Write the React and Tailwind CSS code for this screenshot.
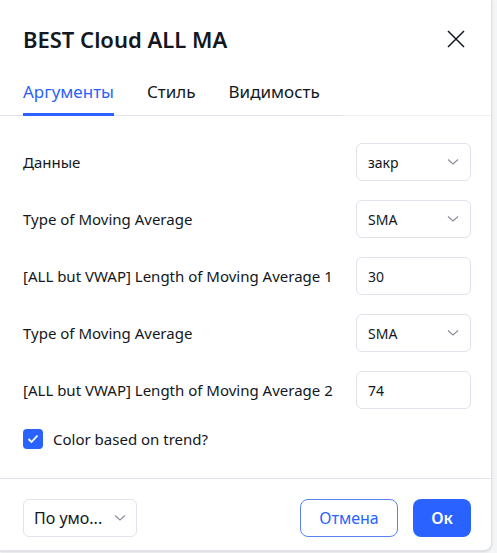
import React, { useState } from 'react';

const font = { fontFamily: '"Noto Sans", "Open Sans", sans-serif' };

const Chevron = ({ className = '' }) => (
  <svg className={className} width="12" height="8" viewBox="0 0 12 8" fill="none">
    <path d="M1 1.5l5 4.5 5-4.5" stroke="#8a8f9c" strokeWidth="1.2" />
  </svg>
);

const SelectBox = ({ value }) => (
  <div className="flex h-[38px] w-[115px] items-center justify-between rounded-md border border-[#e0e3eb] pl-[11px] pr-[11px] text-[14px] text-[#131722]">
    <span>{value}</span>
    <Chevron />
  </div>
);

const NumberBox = ({ value }) => (
  <div className="flex h-[38px] w-[115px] items-center rounded-md border border-[#e0e3eb] pl-[11px] text-[14px] text-[#131722]">
    {value}
  </div>
);

const rows = [
  { label: 'Данные', kind: 'select', value: 'закр' },
  { label: 'Type of Moving Average', kind: 'select', value: 'SMA' },
  { label: '[ALL but VWAP] Length of Moving Average 1', kind: 'number', value: '30' },
  { label: 'Type of Moving Average', kind: 'select', value: 'SMA' },
  { label: '[ALL but VWAP] Length of Moving Average 2', kind: 'number', value: '74' },
];

export default function App() {
  const [tab, setTab] = useState(0);
  const [checked, setChecked] = useState(true);
  const tabs = ['Аргументы', 'Стиль', 'Видимость'];

  return (
    <div className="h-[553px] w-[497px] overflow-hidden bg-[#f4f5f7]" style={font}>
      <div className="flex h-[551px] w-[492px] flex-col rounded-br-lg border-r border-b border-[#e0e3eb] bg-white shadow-sm">
        {/* Header */}
        <div className="flex items-center justify-between pl-[23px] pr-[25px] pt-[25px]">
          <h1 className="text-[22px] font-semibold leading-7 text-[#131722]">BEST Cloud ALL MA</h1>
          <svg width="20" height="20" viewBox="0 0 20 20" fill="none">
            <path d="M2 2l16 16M18 2L2 18" stroke="#131722" strokeWidth="1.5" />
          </svg>
        </div>

        {/* Tabs */}
        <div className="mt-[27px] border-b border-[#eef0f3]">
          <div className="flex w-[343px] gap-[33px] border-b border-[#e0e3eb] pl-[23px] -mb-px">
            {tabs.map((t, i) => (
              <button
                key={t}
                onClick={() => setTab(i)}
                className={`-mb-px border-b-[3px] pb-[9px] text-[17px] leading-6 ${
                  tab === i ? 'border-[#2962ff] text-[#2962ff]' : 'border-transparent text-[#131722]'
                }`}
              >
                {t}
              </button>
            ))}
          </div>
        </div>

        {/* Fields */}
        <div className="flex flex-col gap-[19px] pl-[23px] pr-[20px] pt-[27px]">
          {rows.map((r, i) => (
            <div key={i} className="flex items-center justify-between">
              <span className="text-[15px] text-[#131722]">{r.label}</span>
              {r.kind === 'select' ? <SelectBox value={r.value} /> : <NumberBox value={r.value} />}
            </div>
          ))}
          <label className="flex items-center gap-[10px]">
            <button
              onClick={() => setChecked(!checked)}
              className={`flex h-[20px] w-[20px] items-center justify-center rounded-[4px] ${
                checked ? 'bg-[#2962ff]' : 'border border-[#b2b5be]'
              }`}
            >
              {checked && (
                <svg width="12" height="10" viewBox="0 0 12 10" fill="none">
                  <path d="M1.5 5l3 3 6-6.5" stroke="white" strokeWidth="1.8" />
                </svg>
              )}
            </button>
            <span className="text-[15px] text-[#131722]">Color based on trend?</span>
          </label>
        </div>

        {/* Footer */}
        <div className="mt-[27px] flex items-center justify-between border-t border-[#e0e3eb] pl-[23px] pr-[20px] pt-[20px]">
          <div className="flex h-[38px] w-[114px] items-center justify-between rounded-md border border-[#e0e3eb] pl-[10px] pr-[10px] text-[16px] text-[#131722]">
            <span>По умо...</span>
            <Chevron />
          </div>
          <div className="flex items-center gap-[15px]">
            <button className="h-[38px] w-[98px] rounded-lg border border-[#5b83f0] text-[16px] text-[#2962ff]">
              Отмена
            </button>
            <button className="h-[38px] w-[58px] rounded-lg bg-[#2962ff] text-[16px] font-semibold text-white">
              Ок
            </button>
          </div>
        </div>
      </div>
    </div>
  );
}
